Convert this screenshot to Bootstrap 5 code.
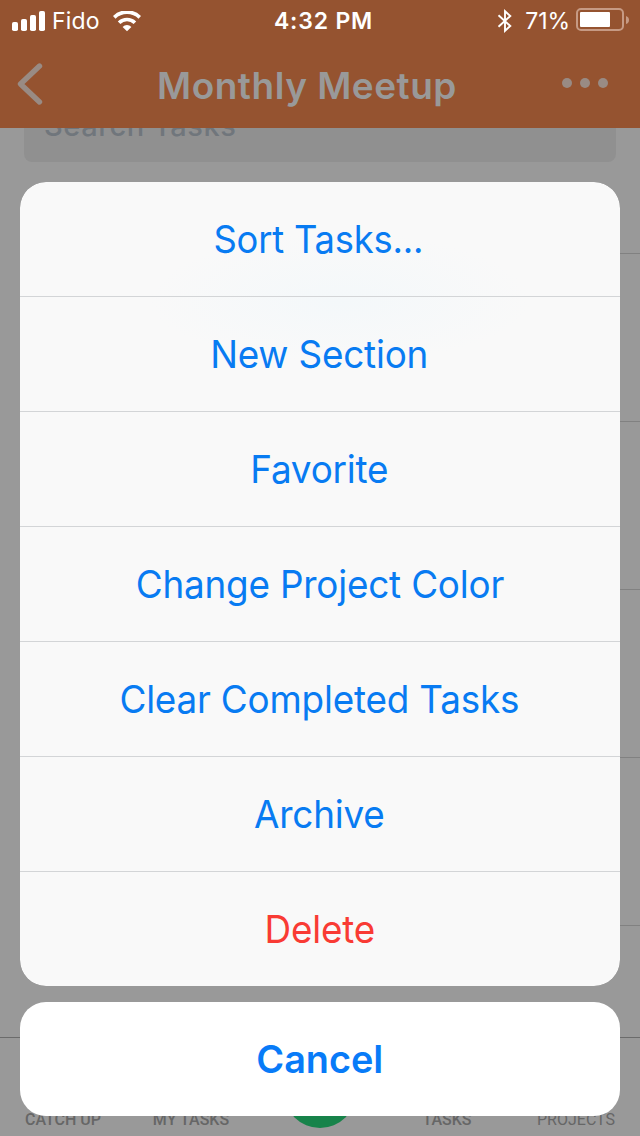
<!DOCTYPE html>
<html lang="en">
<head>
<meta charset="utf-8">
<meta name="viewport" content="width=device-width, initial-scale=1">
<title>Monthly Meetup</title>
<link href="https://cdn.jsdelivr.net/npm/bootstrap@5.3.0/dist/css/bootstrap.min.css" rel="stylesheet">
<style>
body{font-family:Inter,"Liberation Sans",sans-serif;background:#999;width:640px;height:1136px}
.app-top{background:#955330;height:128px}
.status-line{height:40px;font-size:23px;line-height:42px;display:grid;grid-template-columns:1fr auto 1fr;padding:0 11px 0 12px}
.carrier{margin-left:6px;margin-right:13px;letter-spacing:.2px}
.clock{font-weight:600;letter-spacing:.8px;padding-left:6px}
.percent{margin:0 6px 0 12px;letter-spacing:-.1px}
.title-line{height:88px;padding:0 32px 0 16px}
.page-title{font-size:37px;font-weight:600;color:#999;letter-spacing:.5px;line-height:88px;padding:3px 0 0 8px}
.search-box{height:34px;margin:0 24px;background:#909090;border-radius:0 0 8px 8px;overflow:hidden}
.search-box span{display:block;margin:-18px 0 0 20px;line-height:32px;font-size:29px;font-weight:500;letter-spacing:.55px;color:#70767c}
.task-row{height:168px;margin-left:96px;border-bottom:1px solid #818181}
.task-row:first-child{height:92px}
.tab-line{height:99px;border-top:1px solid #6b6b6b}
.tab-label{width:128px;font:500 16px/20px Roboto,sans-serif;color:#666;padding:0 2px 6px 0}
.tab-label:last-child{font-weight:400;padding-right:0}
.add-dot{width:72px;height:72px;background:#17834a;margin:0 28px 8px}
.sheet-layer{padding:0 20px 20px}
.choices{border-radius:26px}
.choice{height:115px;font-size:38.6px;line-height:115px;border:0;border-bottom:1px solid #d3d5d7;color:#087bf2;background:#f9f9f9;padding:0 1px 0 0;letter-spacing:-.2px}
.choice span{display:inline-block;transform:scaleX(.955)}
.choice:first-child{padding-right:3px;background:radial-gradient(ellipse 190px 70px at 320px 120px,#f4f8fa,#f9f9f9)}
.choice:first-child span{transform:scaleX(.942)}
.choice:nth-child(2){background:radial-gradient(ellipse 190px 60px at 320px 5px,#f4f8fa,#f9f9f9)}
.choice:last-child{border:0;height:114px;color:#f93b34}
.cancel{height:114px;border:0;border-radius:26px;background:#fff;color:#087bf8;font-size:38.6px;font-weight:600;margin-top:16px;padding:2px 1px 0 0}
.cancel span{display:inline-block;transform:scaleX(.98)}
</style>
</head>
<body class="position-relative overflow-hidden">
<div class="d-flex flex-column h-100">
  <header class="app-top">
    <div class="status-line text-white">
      <div class="d-flex align-items-center">
        <svg width="34" height="20" viewBox="0 0 34 20" fill="#fff"><rect y="11" width="6" height="9" rx="1.8"/><rect x="9" y="8" width="6" height="12" rx="1.8"/><rect x="18" y="4" width="6" height="16" rx="1.8"/><rect x="27" width="6" height="20" rx="1.8"/></svg>
        <span class="carrier">Fido</span>
        <svg width="28" height="21" viewBox="0 0 28 21" fill="none" stroke="#fff" stroke-width="3.7"><path d="M1.2 6.3a18.4 18.4 0 0 1 25.6 0M6.1 11.7a11.3 11.3 0 0 1 15.8 0"/><path d="M9.6 15.9a6.3 6.3 0 0 1 8.8 0L14 20.3z" fill="#fff" stroke="none"/></svg>
      </div>
      <span class="clock">4:32 PM</span>
      <div class="d-flex align-items-center justify-content-end">
        <svg width="16" height="24" viewBox="0 0 16 24" fill="none" stroke="#fff" stroke-width="1.9"><path d="M1.5 6.2 13.3 17 8 21.8V2.2L13.3 7 1.5 17.8"/></svg>
        <span class="percent">71%</span>
        <svg class="mb-1" width="53" height="23" viewBox="0 0 53 23"><rect x="1" y="1" width="46" height="21" rx="4" fill="none" stroke="#c69a84" stroke-width="2"/><rect x="4" y="4" width="30" height="15" rx="1" fill="#fff"/><path d="M50 8q3 1 3 4t-3 4z" fill="#c69a84"/></svg>
      </div>
    </div>
    <div class="title-line d-flex align-items-center justify-content-between">
      <svg width="28" height="44" viewBox="0 0 28 44" fill="none" stroke="#998b84" stroke-width="5.4" stroke-linecap="round" stroke-linejoin="round"><path d="M23.5 4 4.5 22l19 18"/></svg>
      <h1 class="page-title m-0">Monthly Meetup</h1>
      <svg width="46" height="12" viewBox="0 0 46 12" fill="#998b84"><circle cx="5" cy="5" r="5"/><circle cx="23" cy="5" r="5"/><circle cx="41" cy="5" r="5"/></svg>
    </div>
  </header>
  <main class="flex-grow-1">
    <div class="search-box"><span>Search Tasks</span></div>
    <div>
      <div class="task-row"></div><div class="task-row"></div><div class="task-row"></div><div class="task-row"></div><div class="task-row"></div>
    </div>
  </main>
  <nav class="tab-line d-flex align-items-end text-center">
    <span class="tab-label">CATCH UP</span><span class="tab-label">MY TASKS</span>
    <span class="add-dot rounded-circle"></span>
    <span class="tab-label">TASKS</span><span class="tab-label">PROJECTS</span>
  </nav>
</div>
<div class="sheet-layer position-absolute bottom-0 start-0 w-100 d-flex flex-column">
  <div class="choices list-group overflow-hidden text-center">
    <a class="choice list-group-item"><span>Sort Tasks...</span></a>
    <a class="choice list-group-item"><span>New Section</span></a>
    <a class="choice list-group-item"><span>Favorite</span></a>
    <a class="choice list-group-item"><span>Change Project Color</span></a>
    <a class="choice list-group-item"><span>Clear Completed Tasks</span></a>
    <a class="choice list-group-item"><span>Archive</span></a>
    <a class="choice list-group-item"><span>Delete</span></a>
  </div>
  <button class="cancel btn"><span>Cancel</span></button>
</div>
<script src="https://cdn.jsdelivr.net/npm/bootstrap@5.3.0/dist/js/bootstrap.bundle.min.js"></script>
</body>
</html>
